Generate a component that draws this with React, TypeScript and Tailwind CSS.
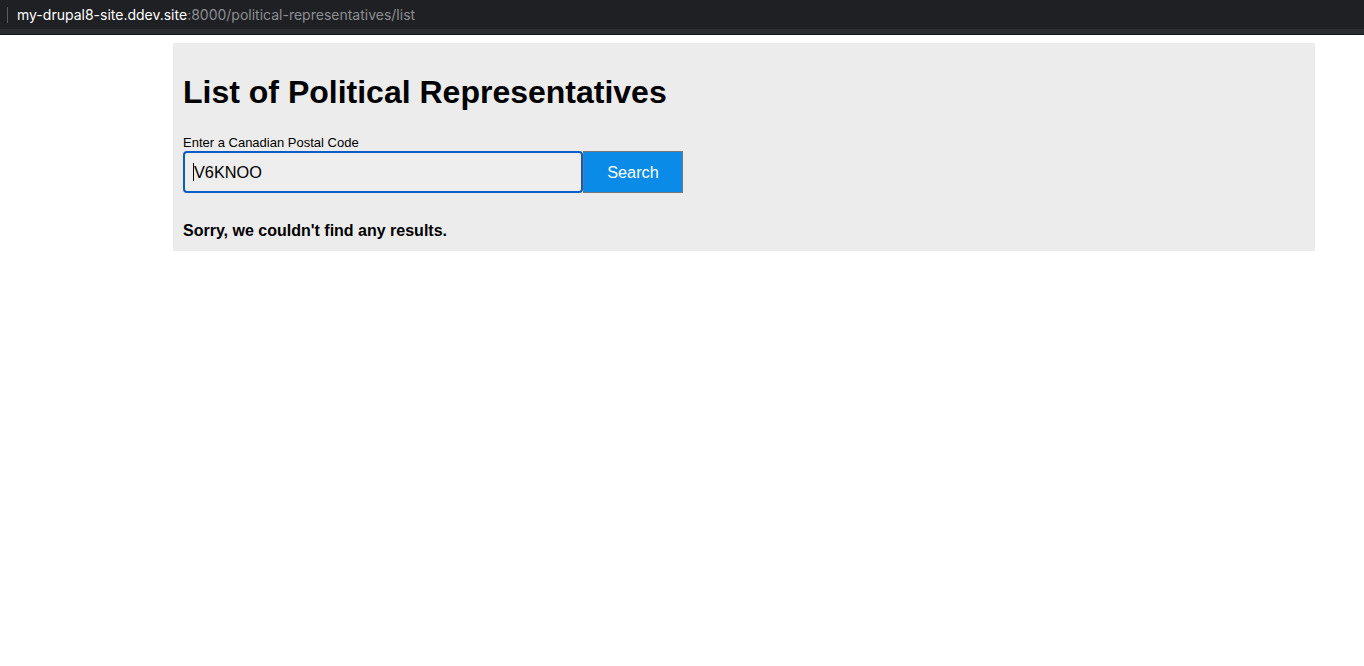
export default function App() {
  return (
    <div className="min-h-[666px] bg-white font-['Liberation_Sans',Arial,sans-serif] text-black">
      {/* Browser address bar */}
      <div className="h-[29px] bg-[#1f2023] flex items-center">
        <div className="ml-[7px] w-px h-[16px] bg-[#5a5b5f]" />
        <div className="ml-[9px] mt-[1px] text-[14px] leading-[16px] font-['Inter',sans-serif]">
          <span className="text-white">my-drupal8-site.ddev.site</span>
          <span className="text-[#8d8e93]">:8000/political-representatives/list</span>
        </div>
      </div>
      <div className="h-[5px] bg-[#2b2c30]" />
      <div className="h-px bg-[#141416]" />

      {/* Page */}
      <div className="pt-[8px] pl-[173px] pr-[49px]">
        <div className="bg-[#ececec] p-[10px] pb-[11px]">
          <h1 className="mt-[21px] mb-[24px] text-[32px] leading-[37px] font-bold">
            List of Political Representatives
          </h1>
          <label className="block text-[13px] leading-[15px]">Enter a Canadian Postal Code</label>
          <div className="flex mt-[1px]">
            <div className="w-[400px] h-[42px] border-2 border-[#0b5cc4] rounded-[4px] bg-[#eeeeee] flex items-center pl-[8px] text-[16.3px]">
              <span className="w-px h-[18px] bg-black" />
              <span>V6KNOO</span>
            </div>
            <button className="w-[100px] h-[42px] bg-[#0a8be8] border border-[#777777] text-white text-[16.3px] flex items-center justify-center">
              Search
            </button>
          </div>
          <p className="mt-[29px] text-[16px] leading-[18px] font-bold">Sorry, we couldn't find any results.</p>
        </div>
      </div>
    </div>
  );
}
